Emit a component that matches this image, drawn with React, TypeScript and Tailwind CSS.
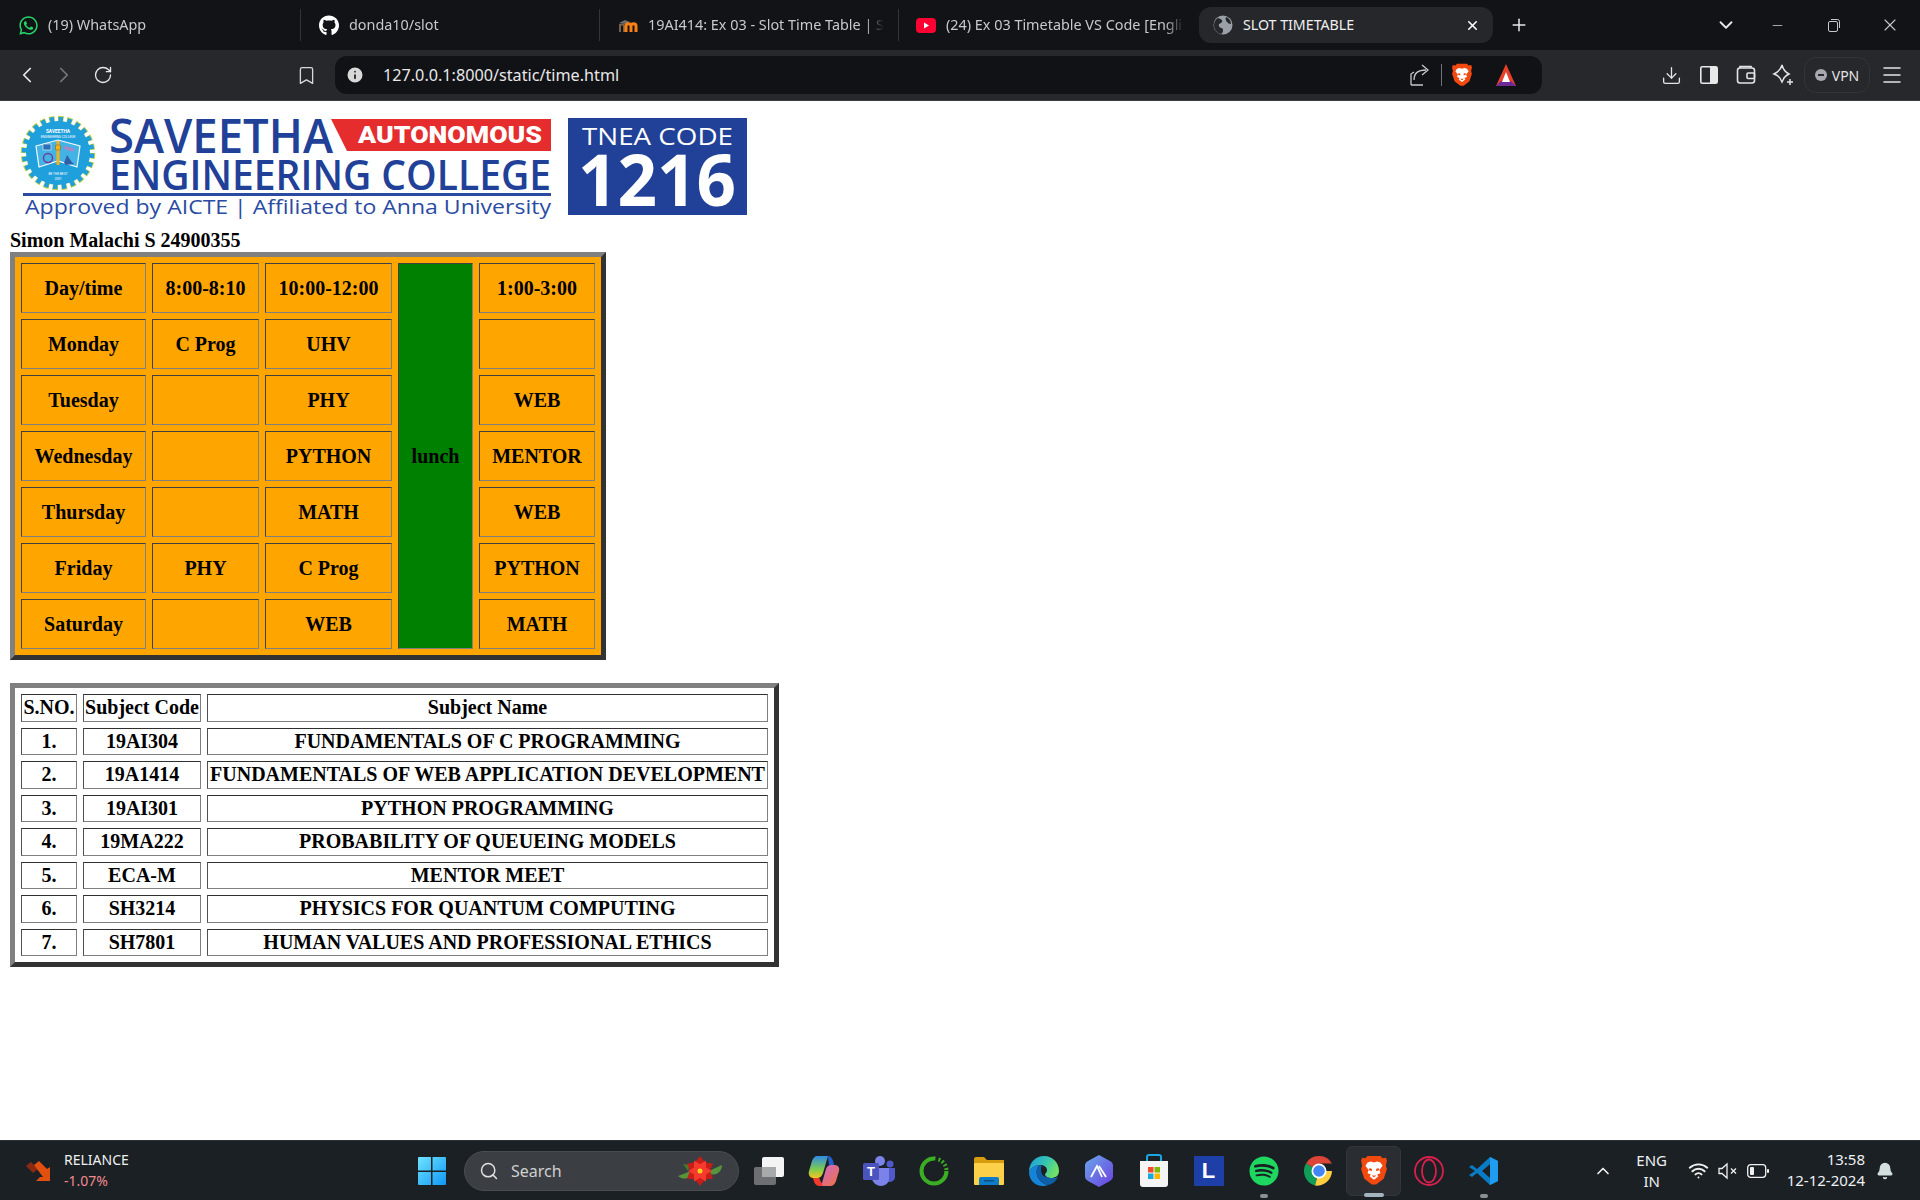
import React from 'react';
import { ChevronLeft, ChevronRight, ChevronDown, ChevronUp, RotateCw, Bookmark, Info, Plus, X, Minus, Download, Menu, Search, Wifi, Bell } from 'lucide-react';
import { FaWhatsapp, FaGithub, FaSpotify } from 'react-icons/fa';

const timetable = [
  ['Day/time', '8:00-8:10', '10:00-12:00', '1:00-3:00'],
  ['Monday', 'C Prog', 'UHV', ''],
  ['Tuesday', '', 'PHY', 'WEB'],
  ['Wednesday', '', 'PYTHON', 'MENTOR'],
  ['Thursday', '', 'MATH', 'WEB'],
  ['Friday', 'PHY', 'C Prog', 'PYTHON'],
  ['Saturday', '', 'WEB', 'MATH'],
];

const subjects = [
  ['1.', '19AI304', 'FUNDAMENTALS OF C PROGRAMMING'],
  ['2.', '19A1414', 'FUNDAMENTALS OF WEB APPLICATION DEVELOPMENT'],
  ['3.', '19AI301', 'PYTHON PROGRAMMING'],
  ['4.', '19MA222', 'PROBABILITY OF QUEUEING MODELS'],
  ['5.', 'ECA-M', 'MENTOR MEET'],
  ['6.', 'SH3214', 'PHYSICS FOR QUANTUM COMPUTING'],
  ['7.', 'SH7801', 'HUMAN VALUES AND PROFESSIONAL ETHICS'],
];

const slotCell = 'h-[50px] p-0 border border-t-[#404040] border-l-[#404040] border-r-[#808080] border-b-[#808080] text-center align-middle font-bold';
const subjectCell = 'h-[27.5px] p-0 border border-t-[#303030] border-l-[#505050] border-r-[#808080] border-b-[#808080] text-center align-middle font-bold whitespace-nowrap';

function Moodle() {
  return (
    <svg width="20" height="20" viewBox="0 0 20 20">
      <path d="M1 8l6-3 5 2-5 2z" fill="#6b6b6b" />
      <path d="M2 17v-6c0-2 4-2 4 0v6M2 9v4" stroke="#77604a" strokeWidth="2" fill="none" />
      <path d="M8 17v-6c0-3 5-3 5 0v6M13 11c0-3 5-3 5 0v6" stroke="#f98012" strokeWidth="3" fill="none" />
    </svg>
  );
}

function Youtube() {
  return (
    <svg width="20" height="20" viewBox="0 0 20 20">
      <rect x="0" y="3" width="20" height="15" rx="4" fill="#ff0033" />
      <path d="M8 7.5l5 3-5 3z" fill="#fff" />
    </svg>
  );
}

function Globe() {
  return (
    <svg width="20" height="20" viewBox="0 0 20 20">
      <circle cx="10" cy="10" r="9.5" fill="#9aa0a6" />
      <path d="M5 3c3 1 5 2 4 4S5 8 6 11s4 1 4 4-1 3-2 4c-4-1-7-4-7-9 0-3 2-6 4-7zM13 2c3 1 5 4 5 7-2 0-3-1-4-2s-2-3-1-5z" fill="#26272b" />
    </svg>
  );
}

function BraveLion({ size = 22 }: { size?: number }) {
  return (
    <svg width={size} height={size * 1.16} viewBox="0 0 24 28">
      <path d="M6 1h12l2 2 3-.5L24 5l-1 5 1 3-3 9-7 5.500h-4L3 22 0 13l1-3-1-5 1-2.500L4 3z" fill="#f1490f" />
      <path d="M12 7l-3-1-3 1-2 3 3 4-1 3 3 1-1 2 4 3 4-3-1-2 3-1-1-3 3-4-2-3-3-1z" fill="#fff" />
      <path d="M8 12l2 1v2l-3-1zM16 12l-2 1v2l3-1zM10 19h4l-2 2z" fill="#f1490f" />
    </svg>
  );
}

function ShareIcon() {
  return (
    <svg width="22" height="24" viewBox="0 0 22 24" fill="none" stroke="#c8c8c8" strokeWidth="1.300">
      <path d="M2 22h12M2 22V11l3-2M5 17c0-7 4-10 12-10M13 2l6 5-6 5" />
    </svg>
  );
}

function Triangle() {
  return (
    <svg width="24" height="22" viewBox="0 0 24 22">
      <path d="M12 0L2 22h20z" fill="#e8402a" />
      <path d="M7 17L2 22h20l-5-5z" fill="#6b2a96" />
      <path d="M12 8l-4 10h8z" fill="#fff" />
    </svg>
  );
}

function Wallet() {
  return (
    <svg width="20" height="20" viewBox="0 0 20 20" fill="none" stroke="#e4e4e4" strokeWidth="1.600">
      <rect x="1.500" y="3" width="17" height="15" rx="2.500" />
      <path d="M4 3V1.500h11V3" />
      <rect x="11" y="8" width="7.500" height="5.500" rx="1" />
    </svg>
  );
}

function Leo() {
  return (
    <svg width="22" height="24" viewBox="0 0 22 24" fill="none" stroke="#e4e4e4" strokeWidth="1.500">
      <path d="M10 2c1 4 3 7 7 9-3 1.500-5 3-6 6l-1 2-1-2c-1-3-3-4.500-7-6 4-2 7-5 8-9z" />
      <path d="M18 16v6M15 19h6" />
    </svg>
  );
}

function SidebarIcon() {
  return (
    <svg width="18" height="18" viewBox="0 0 18 18">
      <rect x="0.800" y="0.800" width="16.400" height="16.400" rx="1.500" fill="none" stroke="#e8e8e8" strokeWidth="1.600" />
      <rect x="10" y="1" width="7" height="16" fill="#e8e8e8" />
    </svg>
  );
}

function RestoreIcon() {
  return (
    <svg width="14" height="14" viewBox="0 0 14 14" fill="none" stroke="#c8c8c8" strokeWidth="1">
      <rect x="1.500" y="3.500" width="9" height="10" rx="1.500" />
      <path d="M4 1.500h6.500a2 2 0 0 1 2 2V10" />
    </svg>
  );
}

function Emblem() {
  return (
    <g>
      <circle cx="58" cy="153" r="33.500" fill="none" stroke="#c5d34a" strokeWidth="7.500" pathLength="96" strokeDasharray="2.500 1.500" />
      <circle cx="58" cy="153" r="33.500" fill="none" stroke="#1f9fdc" strokeWidth="5.500" pathLength="96" strokeDasharray="2 2" strokeDashoffset="-0.250" />
      <circle cx="58" cy="153" r="32" fill="#1f9fdc" />
      <text x="58" y="133" fontSize="4.800" fontWeight="700" fill="#fff" textAnchor="middle" fontFamily="Roboto, sans-serif">SAVEETHA</text>
      <text x="58" y="138" fontSize="3.200" fill="#fff" textAnchor="middle" fontFamily="Roboto, sans-serif">ENGINEERING COLLEGE</text>
      <path d="M36 146l22-6 22 6-3 21-19-6-19 6z" fill="#43b3e6" stroke="#f2fafd" strokeWidth="1.200" />
      <path d="M58 141v24" stroke="#f6b21b" strokeWidth="3" />
      <rect x="43" y="144" width="8" height="6" fill="#2f6fb5" stroke="#e8f4fb" strokeWidth="0.600" />
      <circle cx="48" cy="158" r="4.500" fill="none" stroke="#6d3f98" strokeWidth="1.500" />
      <path d="M64 146l10 2-1 4-9-3z" fill="#a58ac9" />
      <path d="M64 163l3-8 4 6 3 3-8 1z" fill="#2f5fa8" />
      <rect x="55.500" y="145" width="5" height="5" rx="1" fill="#f6b21b" stroke="#7a5b10" strokeWidth="0.500" />
      <text x="58" y="175" fontSize="3.200" fill="#fff" textAnchor="middle" fontFamily="Roboto, sans-serif">BE THE BEST</text>
      <text x="58" y="180" fontSize="3.200" fill="#fff" textAnchor="middle" fontFamily="Roboto, sans-serif">2001</text>
    </g>
  );
}

function Logo() {
  return (
    <svg className="block" width="745" height="125" viewBox="10 104 745 125">
      <Emblem />
      <text x="109" y="153" fontSize="47" fontWeight="600" textLength="224" lengthAdjust="spacingAndGlyphs" fill="#214098" fontFamily="'Open Sans', sans-serif">SAVEETHA</text>
      <path d="M331 119h220v32H347z" fill="#e42d2c" />
      <text x="358" y="143" fontSize="23" fontWeight="900" textLength="184" lengthAdjust="spacingAndGlyphs" fill="#fff" fontFamily="Roboto, sans-serif">AUTONOMOUS</text>
      <text x="109" y="190" fontSize="41" fontWeight="600" textLength="442" lengthAdjust="spacingAndGlyphs" fill="#214098" fontFamily="'Open Sans', sans-serif">ENGINEERING COLLEGE</text>
      <rect x="23" y="193" width="528" height="3" fill="#2b4ba3" />
      <text x="25" y="214" fontSize="20" fontWeight="500" textLength="526" lengthAdjust="spacingAndGlyphs" fill="#2b4ba3" fontFamily="'Open Sans', sans-serif">Approved by AICTE  |  Affiliated to Anna University</text>
      <rect x="568" y="118" width="179" height="97" fill="#214098" />
      <text x="582" y="145" fontSize="24" fontWeight="500" textLength="151" lengthAdjust="spacingAndGlyphs" fill="#fff" fontFamily="'Open Sans', sans-serif">TNEA CODE</text>
      <text x="578" y="206" fontSize="72" fontWeight="700" textLength="158" lengthAdjust="spacingAndGlyphs" fill="#fff" fontFamily="'Open Sans', sans-serif">1216</text>
    </svg>
  );
}

function Tab({ icon, title, width = 'w-[299px]' }: { icon: React.ReactNode; title: string; width?: string }) {
  return (
    <div className={`${width} h-[32px] flex items-center gap-[10px] pl-[18px] pr-[14px] border-r border-[#33343a] shrink-0`}>
      <span className="w-[20px] h-[20px] flex items-center justify-center shrink-0">{icon}</span>
      <span className="flex-1 overflow-hidden whitespace-nowrap text-[14.400px] text-[#c8c9cc] [mask-image:linear-gradient(to_right,black_92%,transparent)]">{title}</span>
    </div>
  );
}

function BrowserChrome() {
  return (
    <div className="font-['Noto_Sans',sans-serif]">
      <div className="h-[50px] bg-[#121316] flex items-center">
        <Tab width="w-[301px]" icon={<FaWhatsapp size={21} color="#25d366" className="ml-[1px]" />} title="(19) WhatsApp" />
        <Tab icon={<FaGithub size={21} color="#fff" />} title="donda10/slot" />
        <Tab icon={<Moodle />} title="19AI414: Ex 03 - Slot Time Table | SEC" />
        <div className="w-[299px] h-[32px] flex items-center gap-[10px] pl-[17px] pr-[14px] shrink-0">
          <Youtube />
          <span className="flex-1 overflow-hidden whitespace-nowrap text-[14.400px] text-[#c8c9cc] [mask-image:linear-gradient(to_right,black_92%,transparent)]">(24) Ex 03 Timetable VS Code [English]</span>
        </div>
        <div className="w-[294px] h-[36px] ml-[1px] rounded-xl bg-[#26272b] flex items-center pl-[14px] pr-[13px] gap-[10px] shrink-0">
          <Globe />
          <span className="flex-1 text-[14.200px] text-[#f0f0f0]">SLOT TIMETABLE</span>
          <X size={15} color="#fff" strokeWidth={2.500} />
        </div>
        <Plus size={20} color="#e8e8e8" strokeWidth={1.800} className="ml-[16px]" />
        <div className="ml-auto flex items-center">
          <ChevronDown size={22} color="#e8e8e8" className="mr-[33px]" />
          <Minus size={15} color="#c8c8c8" strokeWidth={1.300} className="mr-[42px]" />
          <RestoreIcon />
          <X size={20} color="#c8c8c8" strokeWidth={1.300} className="ml-[39px] mr-[20px]" />
        </div>
      </div>
      <div className="h-[51px] bg-[#27282c] border-b border-[#3a3b3f] flex items-center">
        <ChevronLeft size={26} color="#e8e8e8" strokeWidth={1.600} className="ml-[14px]" />
        <ChevronRight size={26} color="#77787c" strokeWidth={1.600} className="ml-[11px]" />
        <RotateCw size={20} color="#e8e8e8" strokeWidth={1.600} className="ml-[16px]" />
        <Bookmark size={21} color="#d8d8d8" strokeWidth={1.500} className="ml-[183px]" />
        <div className="w-[1207px] h-[38px] ml-[18px] rounded-xl bg-[#111216] flex items-center pl-[10px] pr-[24px]">
          <span className="w-[20px] h-[20px] flex items-center justify-center">
            <Info size={20} color="#111216" fill="#d8d8d8" strokeWidth={2} />
          </span>
          <span className="ml-[18px] text-[16.200px] text-[#e8e8e8]">127.0.0.1:8000/static/time.html</span>
          <span className="ml-auto flex items-center">
            <ShareIcon />
            <span className="w-px h-[22px] bg-[#70717a] mx-[10px]" />
            <BraveLion size={20} />
            <span className="ml-[22px]"><Triangle /></span>
          </span>
        </div>
        <div className="ml-auto flex items-center">
          <Download size={21} color="#e4e4e4" strokeWidth={1.500} />
          <span className="ml-[18px]"><SidebarIcon /></span>
          <span className="ml-[18px]"><Wallet /></span>
          <span className="ml-[16px]"><Leo /></span>
          <div className="ml-[10px] w-[66px] h-[36px] rounded-xl border border-[#33343a] flex items-center justify-center gap-[5px]">
            <span className="w-[12px] h-[12px] rounded-full bg-[#a8a9b0] flex items-center justify-center">
              <span className="w-[6px] h-[2px] bg-[#27282c]" />
            </span>
            <span className="text-[14px] text-[#e4e4e4]">VPN</span>
          </div>
          <Menu size={24} color="#e4e4e4" strokeWidth={1.500} className="ml-[10px] mr-[16px]" />
        </div>
      </div>
    </div>
  );
}

function SlotTable() {
  return (
    <table className="w-[596px] table-fixed border-separate border-spacing-[6px] border-[5px] border-solid border-t-[#808080] border-l-[#808080] border-r-[#333333] border-b-[#333333] bg-[#ffa500]">
      <colgroup>
        <col className="w-[125px]" />
        <col className="w-[107px]" />
        <col className="w-[127px]" />
        <col className="w-[75px]" />
        <col className="w-[116px]" />
      </colgroup>
      <tbody>
        {timetable.map((row, i) => (
          <tr key={row[0]}>
            <td className={slotCell}>{row[0]}</td>
            <td className={slotCell}>{row[1]}</td>
            <td className={slotCell}>{row[2]}</td>
            {i === 0 && (
              <td rowSpan={7} className={`${slotCell} bg-[#008000]`}>lunch</td>
            )}
            <td className={slotCell}>{row[3]}</td>
          </tr>
        ))}
      </tbody>
    </table>
  );
}

function SubjectTable() {
  return (
    <table className="mt-[23px] w-[769px] table-fixed border-separate border-spacing-[6px] border-[5px] border-solid border-t-[#808080] border-l-[#808080] border-r-[#333333] border-b-[#333333]">
      <colgroup>
        <col className="w-[56px]" />
        <col className="w-[118px]" />
        <col className="w-[561px]" />
      </colgroup>
      <tbody>
        <tr>
          <td className={subjectCell}>S.NO.</td>
          <td className={subjectCell}>Subject Code</td>
          <td className={subjectCell}>Subject Name</td>
        </tr>
        {subjects.map((row) => (
          <tr key={row[0]}>
            <td className={subjectCell}>{row[0]}</td>
            <td className={subjectCell}>{row[1]}</td>
            <td className={subjectCell}>{row[2]}</td>
          </tr>
        ))}
      </tbody>
    </table>
  );
}

function StockArrow() {
  return (
    <svg width="32" height="24" viewBox="0 0 32 24">
      <path d="M1 7l5-4 7 7-5 4z" fill="#8a2a15" />
      <path d="M9 6l5-4 8 8 3-2v14H11l4-4 3 0z" fill="#e2500f" />
    </svg>
  );
}

function WindowsLogo() {
  return (
    <svg width="28" height="28" viewBox="0 0 28 28">
      <defs>
        <linearGradient id="win" x1="0" y1="0" x2="1" y2="1">
          <stop offset="0" stopColor="#6fe3ff" />
          <stop offset="1" stopColor="#0f97f5" />
        </linearGradient>
      </defs>
      <path d="M1 0h12v13.500H0V1a1 1 0 0 1 1-1zM14.500 0H27a1 1 0 0 1 1 1v12.500H14.500zM0 15h13v13H1a1 1 0 0 1-1-1zM14.500 15H28v12a1 1 0 0 1-1 1H14.500z" fill="url(#win)" />
    </svg>
  );
}

function Poinsettia() {
  const petals = [0, 60, 120, 180, 240, 300];
  const inner = [30, 90, 150, 210, 270, 330];
  return (
    <svg width="46" height="30" viewBox="0 0 46 30">
      <path d="M14 15L1 20c5 4 11 3 14-1zM32 15l13-6c0 6-5 11-12 9z" fill="#58953a" />
      <path d="M13 9L6 8l5 7z" fill="#3f7d2c" />
      {petals.map((a) => (
        <path key={a} d="M23 15l-7-6 7-9 7 9z" fill="#c91d1a" transform={`rotate(${a} 23 15)`} />
      ))}
      {inner.map((a) => (
        <path key={a} d="M23 15l-4-5 4-7 4 7z" fill="#f63a2e" transform={`rotate(${a} 23 15)`} />
      ))}
      <circle cx="23" cy="15" r="2.500" fill="#f1d21c" />
    </svg>
  );
}

function TaskView() {
  return (
    <svg width="30" height="28" viewBox="0 0 30 28">
      <rect x="0" y="10" width="22" height="18" rx="2" fill="#6d6f72" />
      <rect x="8" y="0" width="22" height="20" rx="2" fill="#f4f4f4" />
      <rect x="8" y="10" width="14" height="10" fill="#a8a9ab" />
    </svg>
  );
}

function Copilot() {
  return (
    <svg width="32" height="32" viewBox="0 0 32 32">
      <defs>
        <linearGradient id="co1" x1="0" y1="0" x2="0" y2="1">
          <stop offset="0" stopColor="#2f8be6" />
          <stop offset="0.600" stopColor="#7ecb4f" />
          <stop offset="1" stopColor="#f3c623" />
        </linearGradient>
        <linearGradient id="co2" x1="0" y1="0" x2="1" y2="1">
          <stop offset="0" stopColor="#c86bd8" />
          <stop offset="1" stopColor="#f3703a" />
        </linearGradient>
      </defs>
      <path d="M9 1h11l-5 17c-1 3-3 5-6 5H5c-3 0-5-3-4-7L4 6c1-3 3-5 5-5z" fill="url(#co1)" />
      <path d="M15 31H11l3-3 4-14c1-3 3-4 5-4h4c3 0 5 3 4 6l-3 10c-1 3-3 5-6 5z" fill="url(#co2)" />
      <path d="M20 1c3 0 5 3 6 9h-5z" fill="#2560d0" />
      <path d="M11 31c-3 0-5-3-6-8h6l4 8z" fill="#f03a2d" />
    </svg>
  );
}

function Teams() {
  return (
    <svg width="32" height="30" viewBox="0 0 32 30">
      <circle cx="17" cy="5" r="5" fill="#7b83eb" />
      <circle cx="27" cy="8" r="3.500" fill="#5059c9" />
      <path d="M22 12h10v9c0 3-3 5-6 5-2 0-4-1-4-2z" fill="#5059c9" />
      <path d="M9 12h17v11c0 4-4 7-8 7s-8-3-9-7z" fill="#7b83eb" />
      <rect x="0" y="7" width="16" height="17" rx="1.500" fill="#4b53bc" />
      <text x="8" y="20" fontSize="13" fontWeight="700" fill="#fff" textAnchor="middle" fontFamily="'Liberation Sans', sans-serif">T</text>
    </svg>
  );
}

function GreenRing() {
  return (
    <svg width="30" height="30" viewBox="0 0 30 30">
      <circle cx="15" cy="15" r="12.500" fill="none" stroke="#3cae24" strokeWidth="4" strokeDasharray="60 3 2 2 2 2 2 2 2 2" />
    </svg>
  );
}

function Explorer() {
  return (
    <svg width="30" height="28" viewBox="0 0 30 28">
      <path d="M0 2a2 2 0 0 1 2-2h8l3 3h17v4H0z" fill="#d79b0e" />
      <rect x="0" y="6" width="30" height="22" rx="1" fill="#fdd04a" />
      <path d="M5 28v-6a2 2 0 0 1 2-2h16a2 2 0 0 1 2 2v6z" fill="#0f7cc8" />
      <rect x="10" y="23" width="10" height="1.500" fill="#0a4f85" />
    </svg>
  );
}

function Edge() {
  return (
    <svg width="30" height="30" viewBox="0 0 30 30">
      <defs>
        <linearGradient id="edge" x1="0" y1="0" x2="1" y2="0.400">
          <stop offset="0" stopColor="#1b9de2" />
          <stop offset="0.600" stopColor="#36c5b0" />
          <stop offset="1" stopColor="#6fe06a" />
        </linearGradient>
      </defs>
      <path d="M15 0c9 0 15 7 15 15 0 5-4 7-8 7-3 0-5-1-6-3 0-2 2-2 2-5 0-3-3-5-7-5C6 9 2 12 0 16 0 7 6 0 15 0z" fill="url(#edge)" />
      <path d="M0 16c2-4 6-7 11-7-3 2-4 6-3 10 1 5 6 9 11 10-2 .700-3 1-5 1C6 30 0 24 0 16z" fill="#1583d8" />
      <path d="M11 9c-3 2-4 6-3 10 1 5 6 9 11 10 5-1 8-4 10-8-2 1-4 1-7 1-6 0-10-3-10-8 0-2 0-3 1-4z" fill="#0f5ea8" />
    </svg>
  );
}

function Mullvad() {
  return (
    <svg width="28" height="32" viewBox="0 0 28 32">
      <defs>
        <linearGradient id="hex" x1="0" y1="0" x2="1" y2="1">
          <stop offset="0" stopColor="#6aa8ea" />
          <stop offset="1" stopColor="#6b3fe0" />
        </linearGradient>
      </defs>
      <path d="M14 0l11 6a5 5 0 0 1 3 4v12a5 5 0 0 1-3 4l-11 6-11-6a5 5 0 0 1-3-4V10a5 5 0 0 1 3-4z" fill="url(#hex)" />
      <path d="M6 22l6-11 5 11M14 11l7 11" fill="none" stroke="#fff" strokeWidth="1.800" />
    </svg>
  );
}

function Store() {
  return (
    <svg width="30" height="34" viewBox="0 0 30 34">
      <path d="M8 7V3a2 2 0 0 1 2-2h10a2 2 0 0 1 2 2v4" fill="none" stroke="#19a7e0" strokeWidth="2" />
      <path d="M1 7h28v23a3 3 0 0 1-3 3H4a3 3 0 0 1-3-3z" fill="#f4f4f4" />
      <rect x="9" y="13" width="5.500" height="5.500" fill="#f0492e" />
      <rect x="15.500" y="13" width="5.500" height="5.500" fill="#7fba00" />
      <rect x="9" y="19.500" width="5.500" height="5.500" fill="#19a7e0" />
      <rect x="15.500" y="19.500" width="5.500" height="5.500" fill="#fdb900" />
    </svg>
  );
}

function LBox() {
  return (
    <div className="w-[30px] h-[30px] bg-[#1e3ea8] flex items-center justify-center text-white font-bold text-[22px] leading-none font-['Liberation_Sans',sans-serif]">
      L
    </div>
  );
}

function Chrome() {
  return (
    <svg width="30" height="30" viewBox="0 0 30 30">
      <path d="M15 15L2 7.500A15 15 0 0 1 28 7.500H15z" fill="#db4437" />
      <path d="M15 15L2 7.500A15 15 0 0 0 11 29.500z" fill="#0f9d58" />
      <path d="M15 15h13A15 15 0 0 1 11 29.500z" fill="#ffcd40" />
      <circle cx="15" cy="15" r="7.500" fill="#fff" />
      <circle cx="15" cy="15" r="5.800" fill="#4285f4" />
    </svg>
  );
}

function Opera() {
  return (
    <svg width="30" height="30" viewBox="0 0 30 30" fill="none" stroke="#d9204d" strokeWidth="1.800">
      <circle cx="15" cy="15" r="14" />
      <ellipse cx="15" cy="15" rx="7" ry="11.500" />
    </svg>
  );
}

function VSCode() {
  return (
    <svg width="30" height="30" viewBox="0 0 30 30">
      <path d="M21 1l8 4v20l-8 4L8 17l-5 4-3-2 6-4-6-4 3-2 5 4z" fill="#0a7cc5" />
      <path d="M21 1l8 4v20l-8 4zM21 8l-8 7 8 7z" fill="#1f9cf0" />
      <path d="M21 8l-8 7 8 7z" fill="#1b2024" />
    </svg>
  );
}

function Speaker() {
  return (
    <svg width="20" height="18" viewBox="0 0 20 18" fill="none" stroke="#f0f0f0" strokeWidth="1.300">
      <path d="M1 6.500h3L9 2v14l-5-4.500H1zM13 6.500l5 5M18 6.500l-5 5" />
    </svg>
  );
}

function Battery() {
  return (
    <svg width="22" height="14" viewBox="0 0 22 14">
      <rect x="0.700" y="0.700" width="18" height="12.600" rx="3" fill="none" stroke="#f0f0f0" strokeWidth="1.300" />
      <rect x="3" y="3" width="4" height="8" rx="1" fill="#f0f0f0" />
      <rect x="20" y="5" width="2" height="4" rx="1" fill="#f0f0f0" />
    </svg>
  );
}

function Tile({ children, dot, active }: { children: React.ReactNode; dot?: boolean; active?: boolean }) {
  return (
    <div className={`relative w-[55px] h-[50px] flex items-center justify-center shrink-0 rounded-md ${active ? 'bg-[#2a2e32] border border-[#33373b]' : ''}`}>
      {children}
      {dot && (
        <span className={`absolute bottom-[-2px] left-1/2 -translate-x-1/2 h-[4px] rounded-full ${active ? 'w-[20px] bg-[#a3b3bf]' : 'w-[8px] bg-[#8a8f94]'}`} />
      )}
    </div>
  );
}

function Taskbar() {
  return (
    <div className="h-[60px] bg-[#1b2024] border-t border-[#2c3034] flex items-center font-['Noto_Sans',sans-serif] text-white">
      <div className="w-[404px] flex items-center pl-[25px] shrink-0">
        <StockArrow />
        <div className="ml-[7px] -mt-[1px] leading-[21px]">
          <div className="text-[14px] text-[#f0f0f0]">RELIANCE</div>
          <div className="text-[14px] text-[#f08a8e]">-1.07%</div>
        </div>
      </div>
      <div className="w-[55px] flex justify-center shrink-0"><WindowsLogo /></div>
      <div className="w-[275px] h-[40px] ml-[5px] rounded-full bg-[#3b3e42] border border-[#4a4d50] flex items-center pl-[14px] shrink-0">
        <Search size={20} color="#e0e0e0" strokeWidth={1.800} />
        <span className="ml-[12px] text-[16px] text-[#d0d0d0]">Search</span>
        <span className="ml-auto mr-[15px]"><Poinsettia /></span>
      </div>
      <div className="ml-[2px] flex items-center shrink-0">
        <Tile><TaskView /></Tile>
        <Tile><Copilot /></Tile>
        <Tile><Teams /></Tile>
        <Tile><GreenRing /></Tile>
        <Tile><Explorer /></Tile>
        <Tile><Edge /></Tile>
        <Tile><Mullvad /></Tile>
        <Tile><Store /></Tile>
        <Tile><LBox /></Tile>
        <Tile dot><FaSpotify size={30} color="#1ed760" /></Tile>
        <Tile><Chrome /></Tile>
        <Tile dot active><BraveLion size={26} /></Tile>
        <Tile><Opera /></Tile>
        <Tile dot><VSCode /></Tile>
      </div>
      <div className="ml-auto flex items-center shrink-0 text-[15px] text-[#eef0f2]">
        <ChevronUp size={20} color="#f0f0f0" strokeWidth={2} />
        <div className="ml-[20px] w-[38px] text-center leading-[21px]">
          <div>ENG</div>
          <div>IN</div>
        </div>
        <Wifi size={21} color="#f0f0f0" strokeWidth={2.200} className="ml-[17px]" />
        <span className="ml-[9px] flex items-center"><Speaker /></span>
        <span className="ml-[9px] flex items-center"><Battery /></span>
        <div className="ml-[18px] -mt-[2px] text-right leading-[21px]">
          <div>13:58</div>
          <div>12-12-2024</div>
        </div>
        <Bell size={18} color="#d4dfe0" fill="#d4dfe0" className="ml-[11px] mr-[26px]" />
      </div>
    </div>
  );
}

export default function App() {
  return (
    <div className="w-[1920px] h-[1200px] flex flex-col overflow-hidden bg-white">
      <BrowserChrome />
      <main className="flex-1 pl-[10px] pt-[3px] text-[20px] leading-[23px] text-black font-['Liberation_Serif',serif]">
        <Logo />
        <div className="font-bold">Simon Malachi S 24900355</div>
        <SlotTable />
        <SubjectTable />
      </main>
      <Taskbar />
    </div>
  );
}
